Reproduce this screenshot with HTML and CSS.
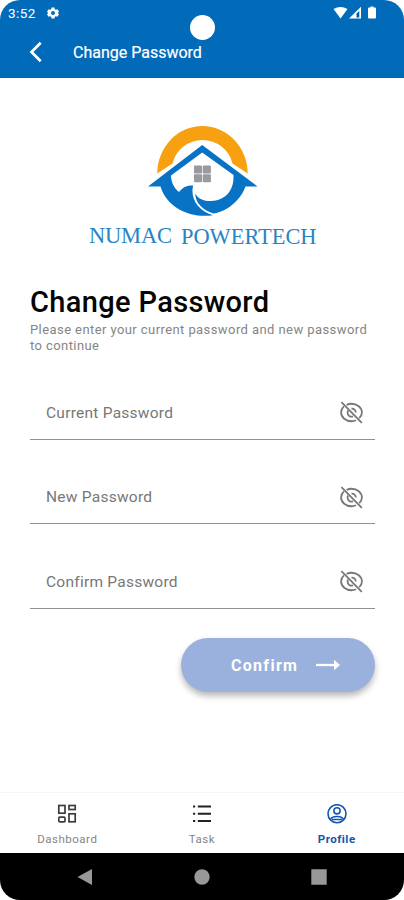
FILE: index.html
```html
<!DOCTYPE html>
<html lang="en">
<head>
<meta charset="utf-8">
<title>Change Password</title>
<link rel="stylesheet" href="styles.css">
</head>
<body>
<svg class="defs" width="0" height="0" aria-hidden="true">
  <symbol id="eye-off" viewBox="0 0 24 24">
    <g fill="none" stroke="currentColor" stroke-width="1.700">
      <path d="M7.300 4.800C8.700 4 10.300 3.600 12 3.600c5.300 0 10 3.700 10 8.400 0 2.100-1 4-2.600 5.400M16.300 19.500c-1.300.6-2.800.9-4.300.9-5.300 0-10-3.700-10-8.400 0-2.300 1-4.300 2.700-5.800"/>
      <path d="M12 8.200c2.300-.2 4.200 1.500 4.100 3.800M13.500 15.800c-2.700.8-5.300-1-5.300-3.700 0-.8.2-1.500.6-2.100"/>
      <path d="M2.300 2l19.600 20"/>
    </g>
  </symbol>
</svg>
<div class="phone">
  <header class="top">
    <div class="status">
      <span class="time">3:52</span>
      <svg class="gear" viewBox="0 0 24 24"><path fill="currentColor" fill-rule="evenodd" d="M9 1h6l.6 3.300 2.200 1.300L21 4.400l3 5.200L21.500 12l2.500 2.400-3 5.200-3.200-1.200-2.200 1.300L15 23H9l-.6-3.300-2.200-1.300L3 19.600l-3-5.200L2.500 12 0 9.600l3-5.200 3.200 1.200 2.200-1.300zM12 8a4 4 0 1 0 0 8 4 4 0 0 0 0-8z"/></svg>
      <svg class="signals" viewBox="0 0 44 14">
        <path fill="#fff" d="M.5 3Q7.500-1 14.500 3L7.500 12.500z"/>
        <path fill="#fff" d="M16 12.500L28 .8v11.700z"/><path fill="#0757a8" d="M23.500 7.500l2.800-2.600v6.600h-2.800z"/>
        <path fill="#fff" d="M37.500.5h3v1H42q1 0 1 1v9q0 1-1 1h-6q-1 0-1-1v-9q0-1 1-1h1.500z"/>
      </svg>
    </div>
    <i class="camera"></i>
    <div class="appbar">
      <svg class="back" viewBox="0 0 14 22"><path d="M11.700 1.700L2.500 11l9.200 9.300" fill="none" stroke="#fff" stroke-width="2.700"/></svg>
      <span class="bar-title">Change Password</span>
    </div>
  </header>
  <main>
    <svg class="logo" viewBox="88 124 230 124" role="img" aria-label="Numac Powertech">
      <path fill="#f7a012" d="M157.200 173.600A45.300 47.600 0 0 1 202.500 126A45.300 47.600 0 0 1 247.700 173.600L232.500 163.400A31 31 0 0 0 202.500 140A31 31 0 0 0 172.500 163.400z"/>
      <path fill="#0873c5" d="M202.200 145L257.500 186.500H245.500C242 197 230 211 213.500 213.500C202 210 195 202 195.300 193.500C199 201 209 202.500 218 200C230 196 234 186 233.500 175L202.200 152.500L171 175.500C171 182 174 188 179 192C183 187 187 185 193.200 185.500C190 197 197 211 213 215.300C190 218.500 167 208 160.500 186.500H148z"/>
      <g fill="#999a9f"><rect x="194" y="165.500" width="8" height="8" rx="1"/><rect x="202.700" y="165.500" width="8.200" height="8" rx="1"/><rect x="194" y="174.200" width="8" height="8" rx="1"/><rect x="202.700" y="174.200" width="8.200" height="8" rx="1"/></g>
      <g class="brand"><text x="89" y="242.500" textLength="83">NUMAC</text><text x="181" y="243.500" textLength="135.500" lengthAdjust="spacingAndGlyphs">POWERTECH</text></g>
    </svg>
    <h1>Change Password</h1>
    <p>Please enter your current password and new password<br>to continue</p>
    <form>
      <div class="field"><span>Current Password</span><svg><use href="#eye-off"/></svg></div>
      <div class="field"><span>New Password</span><svg><use href="#eye-off"/></svg></div>
      <div class="field"><span>Confirm Password</span><svg><use href="#eye-off"/></svg></div>
      <button type="button"><span>Confirm</span><svg viewBox="0 0 24 12"><path d="M0 6h20" stroke="#fff" stroke-width="2.300"/><path d="M18 .8L24 6l-6 5.200z" fill="#fff"/></svg></button>
    </form>
  </main>
  <nav class="tabs">
    <div class="tab"><svg viewBox="0 0 20 20"><g fill="none" stroke="#3c3c3c" stroke-width="1.700"><rect x="1.800" y="1.500" width="6.200" height="7.700"/><rect x="12" y="1.500" width="6.200" height="4"/><rect x="1.800" y="13.200" width="6.200" height="4.600" rx="1"/><rect x="12" y="9.800" width="6.200" height="8"/></g></svg><span>Dashboard</span></div>
    <div class="tab"><svg viewBox="0 0 20 20"><path d="M1 2.500h2.200m2.600 0H19M1 9.700h2.200m2.600 0H19M1 17h2.200m2.600 0H19" stroke="#222" stroke-width="1.900"/></svg><span>Task</span></div>
    <div class="tab active"><svg viewBox="0 0 20 20"><g fill="none" stroke="currentColor" stroke-width="1.600"><circle cx="10" cy="9.700" r="9"/><circle cx="10" cy="6.800" r="3.100"/><path d="M3.500 15.300q1.500-2.800 6.500-2.800t6.500 2.800M5 15.500h10"/></g></svg><span>Profile</span></div>
  </nav>
  <footer class="system">
    <svg viewBox="0 0 18 18"><path d="M1.500 9L16 1v16z"/></svg>
    <svg viewBox="0 0 18 18"><circle cx="9" cy="9" r="7.700"/></svg>
    <svg viewBox="0 0 18 18"><path d="M1.300 1.300h15.400v15.400H1.300z"/></svg>
  </footer>
</div>
</body>
</html>
```
FILE: styles.css
```css
* { box-sizing: border-box; }
body { margin: 0; background: #fff; font-family: Roboto, sans-serif; }
svg { display: block; flex: none; }
.defs { position: absolute; }
.phone { width: 404px; height: 900px; display: flex; flex-direction: column; background: #fff; border-radius: 20px; overflow: hidden; }
.top { position: relative; height: 78px; flex: none; background: #016bb9; border-bottom: 1px solid #1559a5; color: #fff; }
.status { display: flex; align-items: center; height: 26px; padding: 0 27px 0 8px; }
.time { width: 39px; font-size: 13.500px; letter-spacing: .4px; }
.gear { width: 12px; height: 12px; }
.signals { width: 44px; height: 14px; margin-left: auto; }
.camera { position: absolute; left: 190px; top: 15px; width: 25px; height: 25px; border-radius: 50%; background: #fff; }
.appbar { display: flex; align-items: center; height: 52px; padding-left: 29px; }
.back { width: 14px; height: 22px; margin-right: 30px; }
.bar-title { font-size: 16px; font-weight: 400; letter-spacing: 0; white-space: nowrap; -webkit-text-stroke: .2px #fff; }
main { flex: 1; padding: 46px 29px 0 30px; }
.logo { width: 230px; height: 124px; margin-left: 58px; }
.brand { font: 22.500px "Liberation Serif", serif; fill: #2884c3; }
h1 { margin: 37px 0 0; font-size: 29px; line-height: 34px; font-weight: 500; letter-spacing: .35px; color: #050505; white-space: nowrap; }
p { margin: 3px 0 0; font-size: 13px; line-height: 16px; letter-spacing: .42px; color: #858585; white-space: nowrap; }
form { display: flex; flex-direction: column; margin-top: 31px; }
.field { display: flex; align-items: center; justify-content: space-between; height: 54.500px; margin-bottom: 30px; padding: 2px 11px 0 16px; border-bottom: 1px solid #929292; color: #777; font-size: 15.500px; letter-spacing: .25px; }
.field svg { width: 25px; height: 25px; }
button { align-self: flex-end; display: flex; align-items: center; width: 194px; height: 54px; margin: -1px 0 0; padding: 1px 35px 0 50px; justify-content: space-between; border: 0; border-radius: 27px; background: #9bb1dd; box-shadow: 0 4px 6px rgba(0,0,0,.28); color: #fff; font: 700 16px Roboto, sans-serif; letter-spacing: 1.300px; }
button svg { width: 24px; height: 12px; }
.tabs { display: grid; grid-template-columns: repeat(3, 1fr); height: 61px; padding-top: 11px; border-top: 1px solid #f6f6f6; }
.tab { display: flex; flex-direction: column; align-items: center; color: #858585; font-size: 11.500px; letter-spacing: .5px; }
.tab svg { width: 20px; height: 20px; margin-bottom: 8px; }
.active { color: #1057ad; font-weight: 700; }
.system { display: flex; align-items: center; justify-content: space-between; height: 47px; padding: 0 76px; background: #000; fill: #989898; }
.system svg { width: 18px; height: 18px; }
```
